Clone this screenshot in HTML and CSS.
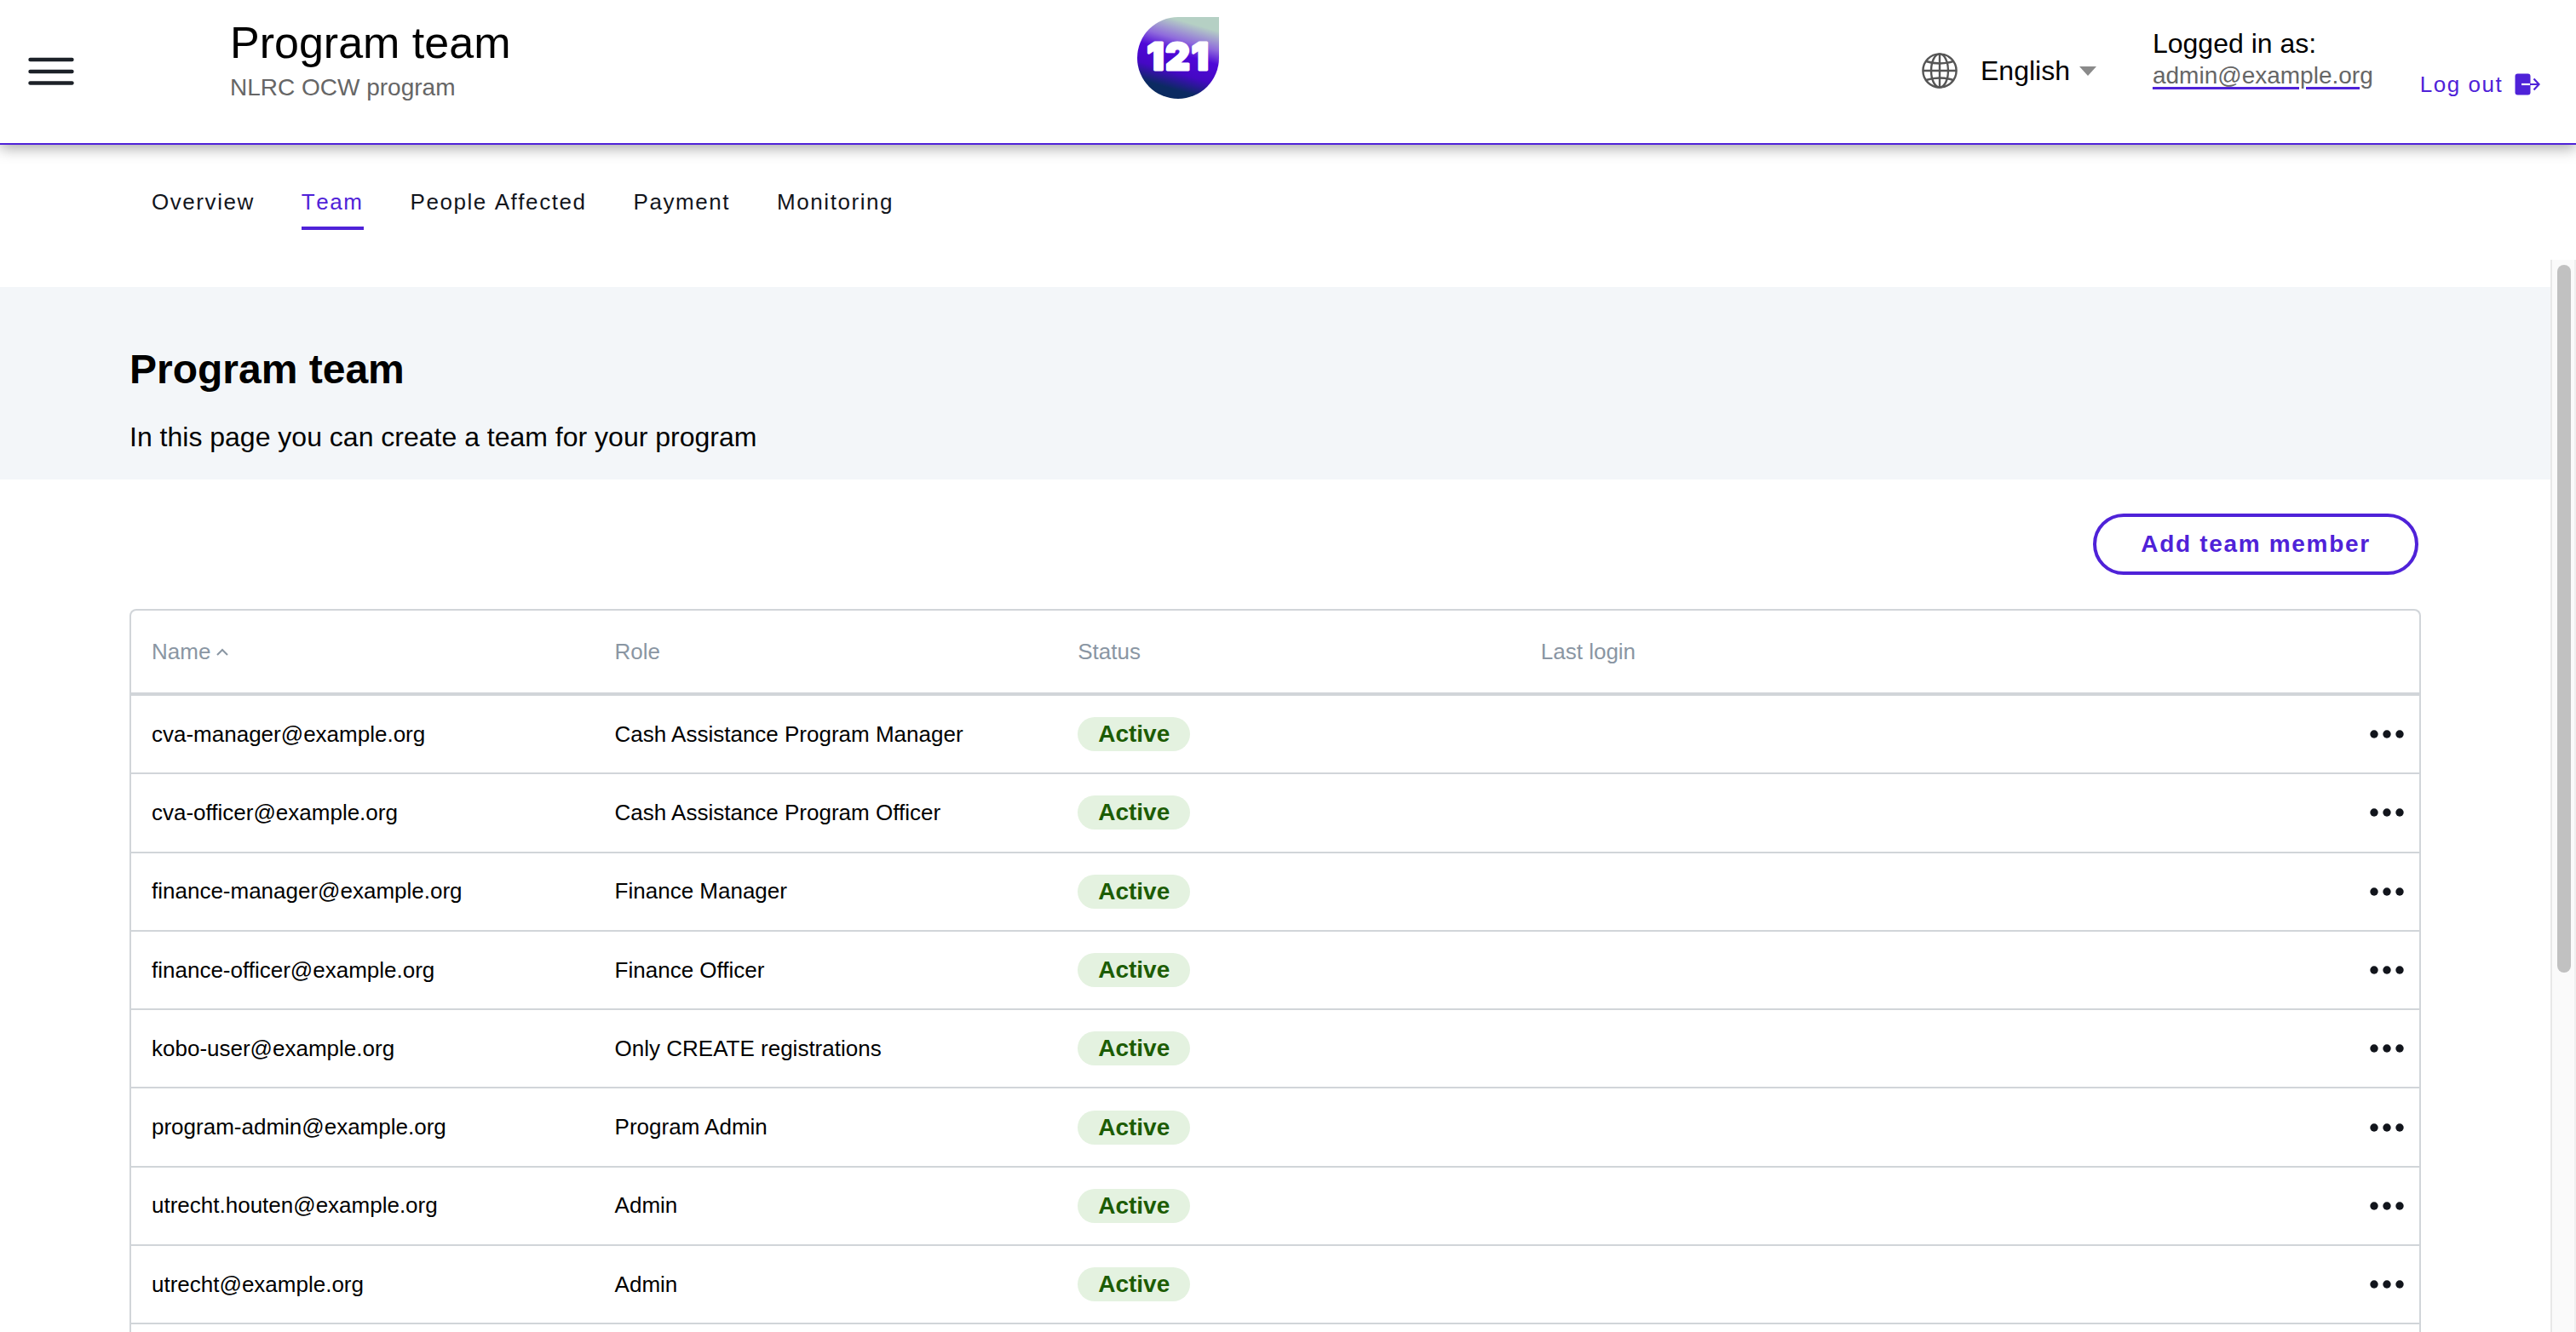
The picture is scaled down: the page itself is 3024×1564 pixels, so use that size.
FILE: index.html
```html
<!DOCTYPE html>
<html lang="en">
<head>
    <meta charset="UTF-8">
    <meta name="viewport" content="width=device-width, initial-scale=1.0">
    <title>Program team</title>
    <link rel="stylesheet" href="styles.css">
</head>
<body>
    <header class="top-bar">
        <button class="menu-button" aria-label="Menu">
            <svg width="54" height="34" viewBox="0 0 54 34" fill="none" stroke="#1c2128" stroke-width="4.4" stroke-linecap="round">
                <path d="M2.5 3H51.5"/>
                <path d="M2.5 17H51.5"/>
                <path d="M2.5 30.5H51.5"/>
            </svg>
        </button>
        <div class="page-title">
            <h1>Program team</h1>
            <div class="program-name">NLRC OCW program</div>
        </div>
        <svg class="logo" width="96" height="96" viewBox="0 0 96 96">
            <defs>
                <linearGradient id="logoFill" gradientUnits="userSpaceOnUse" x1="66" y1="0" x2="38" y2="96">
                    <stop offset="0.08" stop-color="#b5d0c4"/>
                    <stop offset="0.3" stop-color="#8f6bdc"/>
                    <stop offset="0.46" stop-color="#4f08d8"/>
                    <stop offset="0.68" stop-color="#4508c4"/>
                    <stop offset="0.88" stop-color="#0b2a62"/>
                    <stop offset="1" stop-color="#0b2a5e"/>
                </linearGradient>
            </defs>
            <path d="M48 0H96V48A48 48 0 1 1 48 0Z" fill="url(#logoFill)"/>
            <text class="logo-text" x="48.5" y="62">121</text>
        </svg>
        <div class="language">
            <svg width="42" height="42" viewBox="0 0 42 42" fill="none" stroke="#555" stroke-width="2.4">
                <circle cx="21" cy="21" r="19.6"/>
                <ellipse cx="21" cy="21" rx="10" ry="19.6"/>
                <path d="M21 1.4V40.6"/>
                <path d="M1.4 21H40.6"/>
                <path d="M5 10Q21 15 37 10"/>
                <path d="M5 32Q21 27 37 32"/>
            </svg>
            <span class="language-name">English</span>
            <span class="caret"></span>
        </div>
        <div class="user">
            <div class="user-label">Logged in as:</div>
            <a class="user-mail" href="#">admin@example.org</a>
        </div>
        <a class="log-out" href="#">
            Log out
            <svg width="30" height="26" viewBox="0 0 30 26" fill="none">
                <rect x="0.5" y="0.5" width="18" height="25" rx="3" fill="#4f22d8"/>
                <path d="M8 13H18" stroke="#fff" stroke-width="2.2"/>
                <path d="M18 13H28M22.5 6.5L28.5 13L22.5 19.5" stroke="#4f22d8" stroke-width="2.2"/>
            </svg>
        </a>
    </header>

    <nav class="tabs">
        <a href="#">Overview</a>
        <a class="active" href="#">Team</a>
        <a href="#">People Affected</a>
        <a href="#">Payment</a>
        <a href="#">Monitoring</a>
    </nav>

    <div class="page-body">
        <main class="content">
            <section class="intro">
                <h2>Program team</h2>
                <p>In this page you can create a team for your program</p>
            </section>

            <div class="actions">
                <button class="add-button">Add team member</button>
            </div>

            <div class="table-box">
                <table>
                    <thead>
                        <tr>
                            <th>Name
                                <svg class="sort-icon" width="14" height="9" viewBox="0 0 14 9" fill="none" stroke="#8a96a3" stroke-width="2"><path d="M1 8L7 2L13 8"/></svg>
                            </th>
                            <th>Role</th>
                            <th>Status</th>
                            <th>Last login</th>
                            <th></th>
                        </tr>
                    </thead>
                    <tbody>
                        <tr>
                            <td>cva-manager@example.org</td>
                            <td>Cash Assistance Program Manager</td>
                            <td><span class="chip">Active</span></td>
                            <td></td>
                            <td class="more"><svg width="40" height="10" viewBox="0 0 40 10" fill="#12151c"><circle cx="5" cy="5" r="4.7"/><circle cx="20" cy="5" r="4.7"/><circle cx="35" cy="5" r="4.7"/></svg></td>
                        </tr>
                        <tr>
                            <td>cva-officer@example.org</td>
                            <td>Cash Assistance Program Officer</td>
                            <td><span class="chip">Active</span></td>
                            <td></td>
                            <td class="more"><svg width="40" height="10" viewBox="0 0 40 10" fill="#12151c"><circle cx="5" cy="5" r="4.7"/><circle cx="20" cy="5" r="4.7"/><circle cx="35" cy="5" r="4.7"/></svg></td>
                        </tr>
                        <tr>
                            <td>finance-manager@example.org</td>
                            <td>Finance Manager</td>
                            <td><span class="chip">Active</span></td>
                            <td></td>
                            <td class="more"><svg width="40" height="10" viewBox="0 0 40 10" fill="#12151c"><circle cx="5" cy="5" r="4.7"/><circle cx="20" cy="5" r="4.7"/><circle cx="35" cy="5" r="4.7"/></svg></td>
                        </tr>
                        <tr>
                            <td>finance-officer@example.org</td>
                            <td>Finance Officer</td>
                            <td><span class="chip">Active</span></td>
                            <td></td>
                            <td class="more"><svg width="40" height="10" viewBox="0 0 40 10" fill="#12151c"><circle cx="5" cy="5" r="4.7"/><circle cx="20" cy="5" r="4.7"/><circle cx="35" cy="5" r="4.7"/></svg></td>
                        </tr>
                        <tr>
                            <td>kobo-user@example.org</td>
                            <td>Only CREATE registrations</td>
                            <td><span class="chip">Active</span></td>
                            <td></td>
                            <td class="more"><svg width="40" height="10" viewBox="0 0 40 10" fill="#12151c"><circle cx="5" cy="5" r="4.7"/><circle cx="20" cy="5" r="4.7"/><circle cx="35" cy="5" r="4.7"/></svg></td>
                        </tr>
                        <tr>
                            <td>program-admin@example.org</td>
                            <td>Program Admin</td>
                            <td><span class="chip">Active</span></td>
                            <td></td>
                            <td class="more"><svg width="40" height="10" viewBox="0 0 40 10" fill="#12151c"><circle cx="5" cy="5" r="4.7"/><circle cx="20" cy="5" r="4.7"/><circle cx="35" cy="5" r="4.7"/></svg></td>
                        </tr>
                        <tr>
                            <td>utrecht.houten@example.org</td>
                            <td>Admin</td>
                            <td><span class="chip">Active</span></td>
                            <td></td>
                            <td class="more"><svg width="40" height="10" viewBox="0 0 40 10" fill="#12151c"><circle cx="5" cy="5" r="4.7"/><circle cx="20" cy="5" r="4.7"/><circle cx="35" cy="5" r="4.7"/></svg></td>
                        </tr>
                        <tr>
                            <td>utrecht@example.org</td>
                            <td>Admin</td>
                            <td><span class="chip">Active</span></td>
                            <td></td>
                            <td class="more"><svg width="40" height="10" viewBox="0 0 40 10" fill="#12151c"><circle cx="5" cy="5" r="4.7"/><circle cx="20" cy="5" r="4.7"/><circle cx="35" cy="5" r="4.7"/></svg></td>
                        </tr>
                        <tr>
                            <td></td>
                            <td></td>
                            <td></td>
                            <td></td>
                            <td></td>
                        </tr>
                    </tbody>
                </table>
            </div>
        </main>
        <div class="scrollbar">
            <div class="scrollbar-thumb"></div>
        </div>
    </div>
</body>
</html>
```

FILE: styles.css
```css
* {
    box-sizing: border-box;
}
body {
    margin: 0;
    height: 100vh;
    display: flex;
    flex-direction: column;
    overflow: hidden;
    background: white;
    color: black;
    font-family: "Liberation Sans", Arial, sans-serif;
}
a {
    text-decoration: none;
    color: inherit;
}

/* top bar */
.top-bar {
    position: relative;
    z-index: 2;
    flex: none;
    display: flex;
    align-items: flex-start;
    height: 170px;
    padding-left: 33px;
    background: white;
    border-bottom: 2px solid #4f22d8;
    box-shadow: 0 4px 16px rgba(0, 0, 0, 0.35);
}
.menu-button {
    margin-top: 67px;
    width: 54px;
    height: 34px;
    padding: 0;
    border: none;
    background: none;
}
.page-title {
    width: 1065px;
    margin-left: 183px;
    padding-top: 20px;
}
h1 {
    margin: 0;
    font-size: 52px;
    line-height: 60px;
    font-weight: normal;
}
.program-name {
    margin-top: 4px;
    font-size: 28px;
    line-height: 38px;
    color: #666;
}
.logo {
    margin-top: 20px;
}
.logo-text {
    font-family: Inter, sans-serif;
    font-size: 44px;
    font-weight: 900;
    letter-spacing: 2px;
    text-anchor: middle;
    fill: white;
    stroke: white;
    stroke-width: 3px;
    stroke-linejoin: round;
}
.language {
    display: flex;
    align-items: center;
    margin-top: 62px;
    margin-left: 825px;
    height: 42px;
}
.language-name {
    margin-left: 27px;
    font-size: 32px;
    line-height: 40px;
}
.caret {
    margin-left: 11px;
    border-left: 10px solid transparent;
    border-right: 10px solid transparent;
    border-top: 11px solid #8a8a8a;
}
.user {
    margin-top: 31px;
    margin-left: 66px;
}
.user-label {
    font-size: 32px;
    line-height: 40px;
}
.user-mail {
    display: block;
    font-size: 28px;
    line-height: 36px;
    color: #666;
    text-decoration: underline;
    text-decoration-color: #4f22d8;
    text-decoration-thickness: 2.5px;
    text-underline-offset: 4px;
}
.log-out {
    display: flex;
    align-items: center;
    gap: 14px;
    margin-top: 83px;
    margin-left: 55px;
    font-size: 26px;
    line-height: 32px;
    letter-spacing: 1.56px;
    color: #4f22d8;
}

/* tabs */
.tabs {
    flex: none;
    display: flex;
    align-items: flex-start;
    gap: 55px;
    height: 135px;
    padding: 51px 0 0 178px;
    font-size: 26px;
    font-kerning: none;
    line-height: 32px;
    letter-spacing: 1.56px;
    color: #12151c;
}
.tabs a {
    padding-bottom: 13px;
    border-bottom: 4px solid transparent;
}
.tabs a.active {
    color: #4f22d8;
    border-bottom-color: #4f22d8;
}

/* scrolling part, the browser hides real scrollbars so this one is drawn */
.page-body {
    flex: 1;
    min-height: 0;
    display: flex;
}
.content {
    flex: 1;
    min-width: 0;
    padding-top: 32px;
    overflow: hidden;
}
.scrollbar {
    flex: none;
    width: 30px;
    padding: 6px 4px 0 6px;
    background: #fafafa;
    border-left: 2px solid #e8e8e8;
    border-right: 2px solid #efefef;
}
.scrollbar-thumb {
    height: 831px;
    border-radius: 8px;
    background: #c1c1c1;
}
.intro {
    padding: 69px 152px 30px;
    background: #f3f6f9;
}
h2 {
    margin: 0;
    font-size: 48px;
    line-height: 56px;
    font-weight: bold;
}
.intro p {
    margin: 31px 0 0;
    font-size: 32px;
    line-height: 40px;
}
.actions {
    display: flex;
    justify-content: flex-end;
    padding: 40px 155px 40px 0;
}
.add-button {
    width: 382px;
    height: 72px;
    padding: 0;
    background: white;
    border: 4px solid #4f22d8;
    border-radius: 36px;
    font-family: inherit;
    font-size: 28px;
    font-weight: bold;
    letter-spacing: 1.68px;
    color: #4f22d8;
}

/* table */
.table-box {
    margin: 0 152px;
    border: 2px solid #d1d5d9;
    border-bottom: none;
    border-radius: 8px 8px 0 0;
}
table {
    width: 100%;
    table-layout: fixed;
    border-collapse: separate;
    border-spacing: 0;
    font-size: 26px;
}
th, td {
    width: 543.6px;
    padding: 0 0 0 24px;
    text-align: left;
    vertical-align: middle;
}
th:last-child, td:last-child {
    width: auto;
}
th {
    height: 100px;
    border-bottom: 4px solid #d1d5d9;
    font-weight: normal;
    color: #8a96a3;
}
td {
    height: 92.3px;
    border-bottom: 2px solid #d1d5d9;
    color: black;
}
.sort-icon {
    margin-left: -1px;
    vertical-align: 4px;
}
.chip {
    display: inline-block;
    width: 132px;
    height: 40px;
    vertical-align: middle;
    border-radius: 20px;
    background: #e4f2e0;
    font-size: 28px;
    font-weight: bold;
    line-height: 40px;
    text-align: center;
    color: #1c5c04;
}
td.more {
    padding-right: 18px;
    text-align: right;
    line-height: 0;
}
```
